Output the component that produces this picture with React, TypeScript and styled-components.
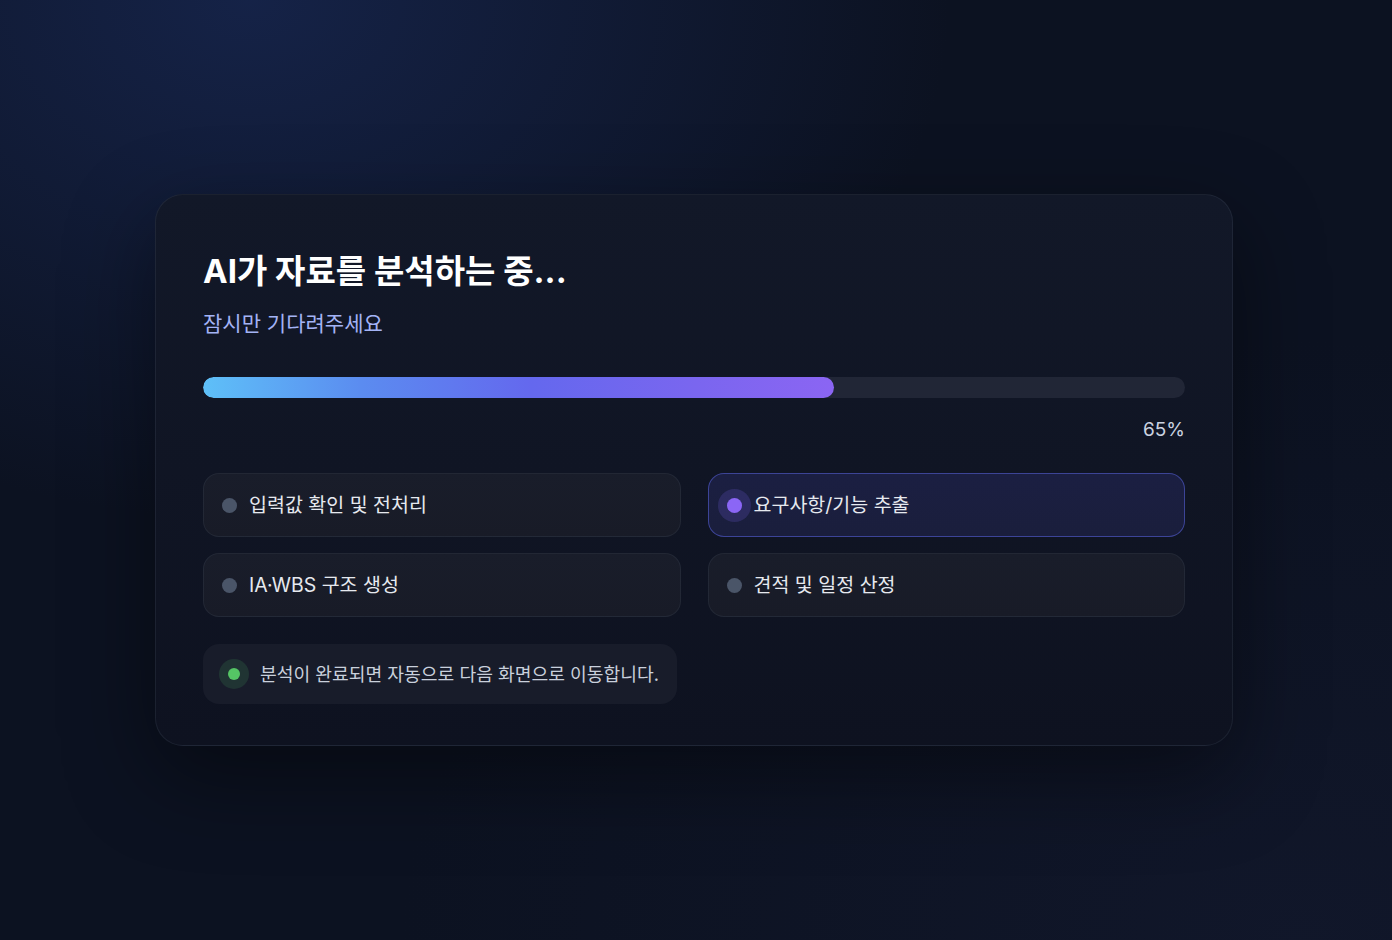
import React from "react";
import styled, { createGlobalStyle } from "styled-components";

const GlobalStyle = createGlobalStyle`
  html, body { margin: 0; padding: 0; }
  body {
    font-family: "Inter", "Noto Sans CJK KR", "Noto Sans", sans-serif;
    background: #0c1220;
  }
  * { box-sizing: border-box; }
`;

const Page = styled.div`
  width: 100%;
  min-height: 940px;
  display: flex;
  align-items: center;
  justify-content: center;
  padding-right: 4px;
  background:
    radial-gradient(ellipse 700px 520px at 250px 0px, rgba(24, 40, 84, 0.75), rgba(24, 40, 84, 0) 100%),
    radial-gradient(ellipse 900px 600px at 1300px 940px, rgba(20, 26, 48, 0.6), rgba(20, 26, 48, 0) 100%),
    #0c1221;
`;

const Card = styled.section`
  width: 1078px;
  padding: 56px 47px 41px;
  border-radius: 28px;
  border: 1px solid rgba(148, 163, 184, 0.1);
  background: linear-gradient(180deg, #121828 0%, #0e1220 100%);
  box-shadow: 0 30px 90px rgba(0, 0, 0, 0.45);
  display: flex;
  flex-direction: column;
`;

const Title = styled.h1`
  margin: 0;
  font-size: 33px;
  line-height: 40px;
  font-weight: 700;
  color: #ffffff;
`;

const Subtitle = styled.p`
  margin: 19px 0 0;
  font-size: 21px;
  line-height: 28px;
  color: #a3b3f5;
`;

const Track = styled.div`
  margin-top: 39px;
  height: 21px;
  border-radius: 11px;
  background: #212636;
  overflow: hidden;
`;

const Fill = styled.div`
  height: 100%;
  border-radius: 11px;
  background: linear-gradient(90deg, #5ec0f8 0%, #5b8cf0 25%, #6468ee 52%, #7a66ef 78%, #8b65f3 100%);
`;

const Percent = styled.div`
  margin-top: 20px;
  text-align: right;
  font-size: 19px;
  line-height: 24px;
  color: #cbd3e0;
`;

const Steps = styled.div`
  margin-top: 31px;
  display: grid;
  grid-template-columns: 1fr 1fr;
  column-gap: 27px;
  row-gap: 16px;
`;

const Step = styled.div<{ $active?: boolean }>`
  height: 64px;
  display: flex;
  align-items: center;
  gap: 12px;
  padding: 0 18px;
  border-radius: 16px;
  border: 1px solid ${(p) => (p.$active ? "rgba(84, 94, 210, 0.6)" : "rgba(148, 163, 184, 0.09)")};
  background: ${(p) =>
    p.$active
      ? "linear-gradient(180deg, #1b1f42 0%, #1a1e3c 100%)"
      : "linear-gradient(180deg, #191d2a 0%, #181b27 100%)"};
`;

const Dot = styled.span<{ $active?: boolean }>`
  flex: none;
  width: 15px;
  height: 15px;
  border-radius: 50%;
  background: ${(p) => (p.$active ? "#8b66f6" : "#4a5568")};
  box-shadow: ${(p) => (p.$active ? "0 0 0 9px rgba(110, 90, 220, 0.22)" : "none")};
`;

const StepLabel = styled.span`
  font-size: 19.5px;
  line-height: 26px;
  color: #e6e9ef;
`;

const Note = styled.div`
  margin-top: 27px;
  align-self: flex-start;
  height: 60px;
  display: flex;
  align-items: center;
  gap: 11px;
  padding: 0 18px 0 16px;
  border-radius: 16px;
  background: #181c2a;
`;

const NoteDot = styled.span`
  flex: none;
  width: 30px;
  height: 30px;
  border-radius: 50%;
  background: rgba(74, 180, 100, 0.16);
  display: flex;
  align-items: center;
  justify-content: center;
  &::after {
    content: "";
    width: 12px;
    height: 12px;
    border-radius: 50%;
    background: #55c565;
  }
`;

const NoteText = styled.span`
  font-size: 18.2px;
  line-height: 24px;
  color: #c9d0dc;
`;

const steps = [
  { label: "입력값 확인 및 전처리", active: false },
  { label: "요구사항/기능 추출", active: true },
  { label: "IA·WBS 구조 생성", active: false },
  { label: "견적 및 일정 산정", active: false },
];

export default function App() {
  const progress = 65;
  return (
    <>
      <GlobalStyle />
      <Page>
        <Card>
          <Title>AI가 자료를 분석하는 중...</Title>
          <Subtitle>잠시만 기다려주세요</Subtitle>
          <Track>
            <Fill style={{ width: `${progress * 0.989}%` }} />
          </Track>
          <Percent>{progress}%</Percent>
          <Steps>
            {steps.map((s) => (
              <Step key={s.label} $active={s.active}>
                <Dot $active={s.active} />
                <StepLabel>{s.label}</StepLabel>
              </Step>
            ))}
          </Steps>
          <Note>
            <NoteDot />
            <NoteText>분석이 완료되면 자동으로 다음 화면으로 이동합니다.</NoteText>
          </Note>
        </Card>
      </Page>
    </>
  );
}
